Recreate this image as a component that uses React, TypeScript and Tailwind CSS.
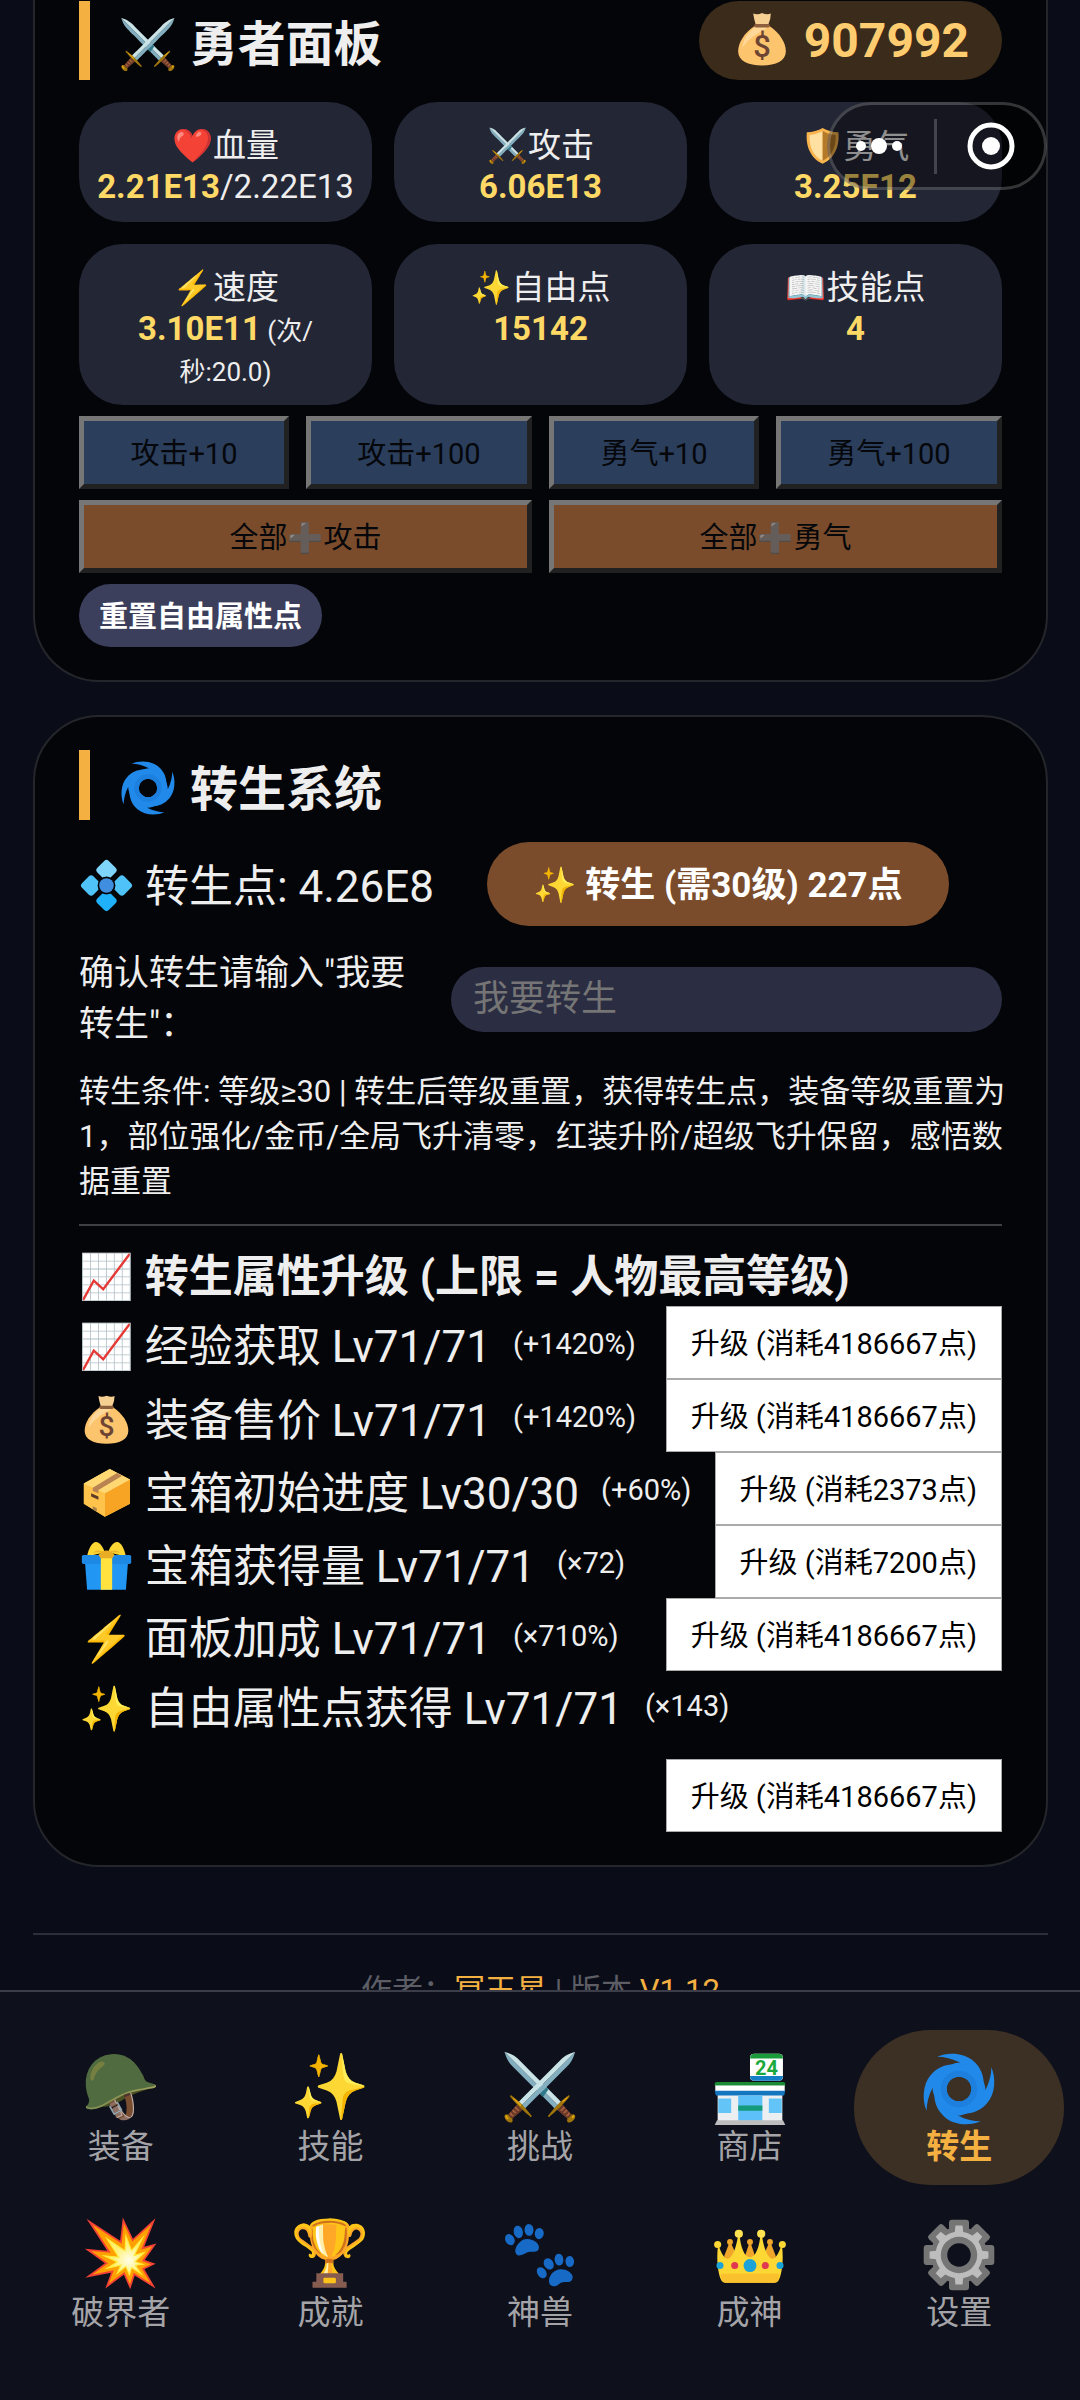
import React from 'react';

const blade = 'M27 9 C45 1 72 2 88 16 C101 27 107 42 106 60 L90 64 A26 26 0 0 0 46 45 L36 34 C46 24 56 19 66 19 C52 12 39 9 27 9Z';
const gearTooth = 'M47 22 V9 Q47 4 52 4 H76 Q81 4 81 9 V22Z';
const gearToothInner = 'M56 32 L58 14 H70 L72 32Z';

const drawings = {
    cyclone: (
        <g fill="#2089ea">
            <path d={blade} />
            <path d={blade} transform="rotate(90 64 64)" />
            <path d={blade} transform="rotate(180 64 64)" />
            <path d={blade} transform="rotate(270 64 64)" />
            <circle cx="64" cy="64" r="32" fill="none" stroke="#2089ea" strokeWidth="22" />
            <circle cx="64" cy="64" r="26" fill="none" stroke="#1d80de" strokeWidth="10" />
        </g>
    ),
    shield: (
        <>
            <path d="M64 6 C50 14 30 20 12 20 C8 60 20 104 64 124 C108 104 120 60 116 20 C98 20 78 14 64 6Z" fill="#f9b44d" />
            <path d="M64 16 C52 23 36 28 21 29 C19 62 30 98 64 114Z" fill="#ffe0a3" />
            <path d="M64 16 C76 23 92 28 107 29 C109 62 98 98 64 114Z" fill="#b5792a" />
        </>
    ),
    bag: (
        <>
            <path d="M48 34 C24 50 10 72 10 92 C10 114 32 124 64 124 C96 124 118 114 118 92 C118 72 104 50 80 34Z" fill="#fdc46e" />
            <path d="M52 34 C30 50 20 68 20 84 C36 60 50 54 74 40 L76 34Z" fill="#ffd899" />
            <path d="M44 6 Q54 10 64 5 Q76 10 84 6 Q84 20 78 32 H50 Q46 20 44 6Z" fill="#f6cf93" />
            <rect x="46" y="30" width="36" height="8" rx="4" fill="#8d5f3c" />
            <text x="64" y="105" textAnchor="middle" fontSize="70" fontWeight="500" fill="#6d4433">$</text>
        </>
    ),
    box: (
        <>
            <path d="M8 42 L72 6 L122 32 L122 92 L60 124 L8 92Z" fill="#ffca57" />
            <path d="M60 66 L122 32 V92 L60 124Z" fill="#f7a424" />
            <path d="M8 42 L60 66 V124 L8 92Z" fill="#ffc24a" />
            <path d="M8 42 L72 6 L122 32 L60 66Z" fill="#ffd873" />
            <path d="M30 52 L90 16 L102 23 L44 58 V66 L30 60Z" fill="#b98352" />
            <path d="M26 66 L44 74 V82 L26 74Z" fill="#5d3b2a" />
            <path d="M30 98 l10 5 v8 l-10 -5Z" fill="#a5804a" />
        </>
    ),
    gift: (
        <>
            <path d="M60 32 C44 36 28 38 16 42 C20 22 28 6 38 6 C48 6 56 20 60 32Z" fill="#fdd835" />
            <path d="M68 32 C84 36 100 38 112 42 C108 22 100 6 90 6 C80 6 72 20 68 32Z" fill="#fdd835" />
            <path d="M30 32 C40 24 50 26 60 32Z M98 32 C88 24 78 26 68 32Z" fill="#f0b429" />
            <path d="M11 58 H117 L112 124 H16Z" fill="#2196f3" />
            <rect x="3" y="38" width="122" height="22" rx="4" fill="#1e88e5" />
            <rect x="50" y="36" width="28" height="88" fill="#ffe23d" />
            <path d="M44 38 Q64 16 84 38 L78 46 H50Z" fill="#e9ad25" />
        </>
    ),
    store: (
        <>
            <rect x="64" y="4" width="56" height="46" rx="7" fill="#fff" />
            <path d="M64 12 Q64 4 72 4 H112 Q120 4 120 12Z" fill="#1b9a3a" />
            <path d="M64 42 H120 Q120 50 112 50 H72 Q64 50 64 42Z" fill="#1580c8" />
            <text x="92" y="40" textAnchor="middle" fontSize="34" fontWeight="700" fill="#1ba83c">24</text>
            <rect x="9" y="64" width="110" height="56" fill="#eceff1" />
            <rect x="4" y="52" width="120" height="8" rx="3" fill="#1b8a35" />
            <rect x="5" y="58" width="118" height="10" fill="#fff" />
            <path d="M4 67 H124 L122 75 H6Z" fill="#1576c0" />
            <path d="M10 80 H32 V105 H10Z M96 80 H118 V105 H96Z" fill="#63c5f7" />
            <rect x="44" y="75" width="41" height="43" fill="#5ec0f8" />
            <rect x="44" y="92" width="41" height="9" fill="#149b7c" />
            <path d="M8 117 H120 L124 125 H4Z" fill="#bdbdbd" />
        </>
    ),
    gear: (
        <>
            <g fill="#757575">
                <circle cx="64" cy="64" r="48" />
                {[0, 45, 90, 135, 180, 225, 270, 315].map((angle) => (
                    <path key={angle} d={gearTooth} transform={`rotate(${angle} 64 64)`} />
                ))}
            </g>
            <g fill="#bdbdbd">
                <circle cx="64" cy="64" r="40" />
                {[0, 45, 90, 135, 180, 225, 270, 315].map((angle) => (
                    <path key={angle} d={gearToothInner} transform={`rotate(${angle} 64 64)`} />
                ))}
            </g>
            <circle cx="64" cy="64" r="31" fill="#757575" />
            <circle cx="64" cy="64" r="20" fill="#0e101b" />
        </>
    ),
    crown: (
        <>
            <path d="M20 66 L30 40 L42 66 L54 70 L64 40 L74 70 L86 66 L98 40 L108 66 L100 84 H28Z" fill="#f0a62b" />
            <circle cx="30" cy="42" r="5" fill="#f0a62b" />
            <circle cx="64" cy="42" r="5" fill="#f0a62b" />
            <circle cx="98" cy="42" r="5" fill="#f0a62b" />
            <path d="M10 46 C16 64 22 72 28 70 C36 66 42 46 44 28 H46 C48 50 54 68 64 68 C74 68 80 50 82 28 H84 C86 46 92 66 100 70 C106 72 112 64 118 46 C122 70 118 100 112 108 Q110 111 106 111 H22 Q18 111 16 108 C10 100 6 70 10 46Z" fill="#fdd835" />
            <circle cx="9" cy="46" r="6" fill="#fdd835" />
            <circle cx="119" cy="46" r="6" fill="#fdd835" />
            <circle cx="45" cy="28" r="7" fill="#ffe252" />
            <circle cx="83" cy="28" r="7" fill="#ffe252" />
            <path d="M14 96 H114 Q113 111 106 111 H22 Q15 111 14 96Z" fill="#fbc02d" />
            <circle cx="64" cy="82" r="11" fill="#1ba3d8" />
            <circle cx="38" cy="82" r="6" fill="#e0394f" />
            <circle cx="90" cy="82" r="6" fill="#e0394f" />
            <circle cx="13" cy="82" r="6" fill="#1ba3d8" />
            <circle cx="115" cy="82" r="6" fill="#1ba3d8" />
        </>
    ),
    diamond: (
        <>
            <rect x="44" y="6" width="40" height="40" rx="8" transform="rotate(45 64 26)" fill="#7fd4fb" />
            <rect x="6" y="44" width="40" height="40" rx="8" transform="rotate(45 26 64)" fill="#4fc3f7" />
            <rect x="82" y="44" width="40" height="40" rx="8" transform="rotate(45 102 64)" fill="#4fc3f7" />
            <rect x="44" y="82" width="40" height="40" rx="8" transform="rotate(45 64 102)" fill="#1fb1fa" />
            <circle cx="64" cy="64" r="22" fill="#040508" />
            <circle cx="64" cy="64" r="18" fill="#3f8ee0" />
        </>
    ),
};

// A name from the drawings above, or any emoji
const Icon: React.FC<{ name: string }> = ({ name }) =>
    name in drawings ? (
        <svg viewBox="-4 -4 136 136" aria-hidden="true" className="inline-block size-[1.25em] align-[-0.25em]">
            {drawings[name as keyof typeof drawings]}
        </svg>
    ) : (
        <>{name}</>
    );

const stats = [
    { icon: '❤️', label: '血量', value: '2.21E13', rest: '/2.22E13' },
    { icon: '⚔️', label: '攻击', value: '6.06E13' },
    { icon: 'shield', label: '勇气', value: '3.25E12' },
    { icon: '⚡', label: '速度', value: '3.10E11', note: '(次/秒:20.0)' },
    { icon: '✨', label: '自由点', value: '15142' },
    { icon: '📖', label: '技能点', value: '4' },
];

const upgrades = [
    { icon: '📈', name: '经验获取', level: '71/71', effect: '(+1420%)', cost: 4186667 },
    { icon: 'bag', name: '装备售价', level: '71/71', effect: '(+1420%)', cost: 4186667 },
    { icon: 'box', name: '宝箱初始进度', level: '30/30', effect: '(+60%)', cost: 2373 },
    { icon: 'gift', name: '宝箱获得量', level: '71/71', effect: '(×72)', cost: 7200 },
    { icon: '⚡', name: '面板加成', level: '71/71', effect: '(×710%)', cost: 4186667 },
    { icon: '✨', name: '自由属性点获得', level: '71/71', effect: '(×143)', cost: 4186667 },
];

const tabs = [
    { icon: '🪖', label: '装备' },
    { icon: '✨', label: '技能' },
    { icon: '⚔️', label: '挑战' },
    { icon: 'store', label: '商店' },
    { icon: 'cyclone', label: '转生', active: true },
    { icon: '💥', label: '破界者' },
    { icon: '🏆', label: '成就' },
    { icon: '🐾', label: '神兽' },
    { icon: 'crown', label: '成神' },
    { icon: 'gear', label: '设置' },
];

const pointButton = 'h-[73px] border-[5px] border-t-[#767676] border-l-[#767676] border-r-[#212121] border-b-[#212121] pt-[3px] text-[29px] leading-none text-[#05070b]';

const HeroPanel: React.FC = () => (
    <section className="rounded-b-[66px] border-2 border-t-0 border-[#24262b] bg-[#040508] px-11 pt-px pb-[33px]">
        <div className="flex items-center justify-between">
            <h2 className="border-l-[11px] border-[#f5b042] pt-2 pl-7 text-[48px] leading-[71px] font-bold">⚔️ 勇者面板</h2>
            <div className="rounded-full bg-[#3a2b1b] px-[33px] text-[48px] leading-[79px] font-bold text-[#ffcd70]">
                <Icon name="bag" /> 907992
            </div>
        </div>

        <div className="mt-[22px] grid grid-cols-3 gap-[22px]">
            {stats.map((stat) => (
                <div key={stat.label} className="rounded-[44px] bg-[#232635] px-4 pt-[23px] pb-[15px] text-center text-[33px] leading-[41px]">
                    <div className="h-[41px]"><Icon name={stat.icon} />{stat.label}</div>
                    <div>
                        <strong className="text-[#ffd966]">{stat.value}</strong>
                        {stat.rest}
                        {stat.note && <small className="text-[26px] leading-none"> {stat.note}</small>}
                    </div>
                </div>
            ))}
        </div>

        <div className="mt-[11px] flex gap-[17px]">
            <button className={`${pointButton} grow bg-[#2b3e5c] px-11`}>攻击+10</button>
            <button className={`${pointButton} grow bg-[#2b3e5c] px-11`}>攻击+100</button>
            <button className={`${pointButton} grow bg-[#2b3e5c] px-11`}>勇气+10</button>
            <button className={`${pointButton} grow bg-[#2b3e5c] px-11`}>勇气+100</button>
        </div>
        <div className="mt-[11px] grid grid-cols-2 gap-[17px]">
            <button className={`${pointButton} bg-[#7a4c2b]`}>全部<span className="opacity-80">➕</span>攻击</button>
            <button className={`${pointButton} bg-[#7a4c2b]`}>全部<span className="opacity-80">➕</span>勇气</button>
        </div>
        <button className="mt-[11px] block h-[63px] rounded-full bg-[#3c3f5c] px-5 pt-[3px] text-[29px] leading-none font-bold text-white">
            重置自由属性点
        </button>
    </section>
);

const RebirthPanel: React.FC = () => (
    <section className="mt-[33px] rounded-[66px] border-2 border-[#24262b] bg-[#040508] px-11 py-[33px]">
        <h2 className="h-[70px] border-l-[11px] border-[#f5b042] pt-2 pl-7 text-[48px] leading-[62px] font-bold">
            <Icon name="cyclone" /> 转生系统
        </h2>

        <div className="mt-[22px] flex items-center gap-[53px] text-[44px]">
            <span className="pt-1.5"><Icon name="diamond" /> 转生点: 4.26E8</span>
            <button className="h-[84px] rounded-full bg-[#7a4c2b] px-[46px] pt-[3px] text-[35px] leading-none font-bold text-white">
                ✨ 转生 (需30级) 227点
            </button>
        </div>

        <div className="mt-[22px] flex items-center gap-[33px]">
            <label htmlFor="confirm" className="w-[339px] shrink-0 text-[35px] leading-[51px]">确认转生请输入"我要转生"：</label>
            <input
                id="confirm"
                type="text"
                placeholder="我要转生"
                className="h-[65px] min-w-0 flex-1 rounded-full bg-[#2b2d42] px-[22px] text-[36px] placeholder:text-[#757575]"
            />
        </div>

        <p className="-mr-2 mt-[19px] text-[31px] leading-[45px]">
            转生条件: 等级≥30 | 转生后等级重置，获得转生点，装备等级重置为1，部位强化/金币/全局飞升清零，红装升阶/超级飞升保留，感悟数据重置
        </p>
        <hr className="mt-5 border-t-2 border-[#3f4043]" />

        <h3 className="mt-[22px] text-[44px] leading-[58px] font-bold">📈 转生属性升级 (上限 = 人物最高等级)</h3>
        {upgrades.map((item) => (
            <div key={item.name} className="flex flex-wrap items-center justify-between gap-y-5">
                <div className="flex items-center gap-[22px] pt-2 text-[44px] leading-[54px]">
                    <span><Icon name={item.icon} /> {item.name} Lv{item.level}</span>
                    <small className="pb-1.5 text-[29px]">{item.effect}</small>
                </div>
                <button className="ml-auto h-[73px] border border-[#aaaaaa] bg-white px-6 pt-[3px] text-[29px] leading-none text-black">
                    升级 (消耗{item.cost}点)
                </button>
            </div>
        ))}
    </section>
);

const CapsuleMenu: React.FC = () => (
    <div className="absolute top-[102px] right-[33px] flex h-[88px] w-[220px] items-center rounded-full border-3 border-white/20 bg-black/40">
        <button aria-label="更多" className="flex w-[104px] justify-center pr-1.5">
            <svg width="48" height="18" viewBox="0 0 48 18" fill="#fff">
                <circle cx="6" cy="9" r="5" />
                <circle cx="24" cy="9" r="8" />
                <circle cx="42" cy="9" r="5" />
            </svg>
        </button>
        <span className="h-[55px] w-[3px] bg-white/20" />
        <button aria-label="关闭" className="flex flex-1 justify-center">
            <svg width="48" height="48" viewBox="0 0 48 48">
                <circle cx="24" cy="24" r="21" fill="none" stroke="#fff" strokeWidth="5" />
                <circle cx="24" cy="24" r="9" fill="#fff" />
            </svg>
        </button>
    </div>
);

const App: React.FC = () => (
    <div className="relative flex h-screen flex-col bg-[#0a0d18] font-['Roboto','Noto_Sans_CJK_SC','Noto_Color_Emoji',sans-serif] text-[#eeeeee]">
        <main className="min-h-0 flex-1 overflow-y-auto pr-8 pl-[33px] [scrollbar-width:none]">
            <HeroPanel />
            <RebirthPanel />
            <footer className="mt-[66px] border-t-2 border-[#2c2e38] py-[33px] text-center text-[31px] leading-[45px] text-[#5d5e65]">
                作者：<span className="text-[#f5b042]">冥王星</span> | 版本 <span className="text-[#f5b042]">V1.12</span>
            </footer>
        </main>

        <nav className="grid grid-cols-5 gap-y-[11px] border-t-2 border-[#3b3d48] bg-[#0e101b] px-4 pt-[38px] pb-[49px]">
            {tabs.map((tab) => (
                <button
                    key={tab.label}
                    className={`flex h-[155px] flex-col items-center justify-center rounded-[77px] ${tab.active ? 'bg-[#3c3025] font-bold text-[#f5b042]' : 'text-[#a4a4a8]'}`}
                >
                    <span className="h-[78px] text-[64px] leading-[78px]"><Icon name={tab.icon} /></span>
                    <span className="text-[33px] leading-[40px]">{tab.label}</span>
                </button>
            ))}
        </nav>
        <CapsuleMenu />
    </div>
);

export default App;
